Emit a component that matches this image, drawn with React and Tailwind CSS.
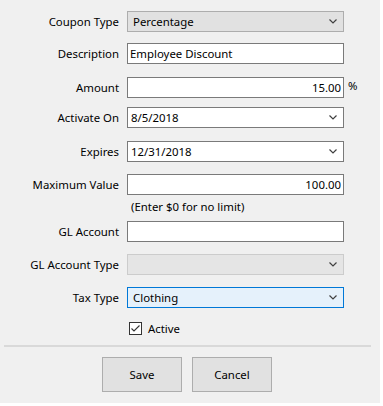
const Chevron = ({ color = "#404040" }) => (
  <svg width="8" height="5" viewBox="0 0 8 5" className="shrink-0">
    <path d="M0.5 0.5 L4 4 L7.5 0.5" fill="none" stroke={color} strokeWidth="1.2" />
  </svg>
);

const Row = ({ label, mt, children, extra }) => (
  <div className={`flex items-center h-[21px] ${mt}`}>
    <div className="w-[120px] pr-px text-right whitespace-nowrap">{label}</div>
    <div className="ml-[7px] w-[217px] h-full">{children}</div>
    {extra}
  </div>
);

const Select = ({ value, variant = "white" }) => {
  const styles = {
    gray: "bg-[#e1e1e1] border-[#adadad]",
    white: "bg-white border-[#7a7a7a]",
    disabled: "bg-[#e5e5e5] border-[#cccccc]",
    focus: "bg-[#e5f1fb] border-[#0078d7]",
  };
  return (
    <div className={`flex items-center justify-between h-full border ${styles[variant]} ${variant === "white" ? "pl-[3px]" : "pl-[5px]"} pr-[6px]`}>
      <span>{value}</span>
      <Chevron />
    </div>
  );
};

const Input = ({ value = "", right }) => (
  <div className={`flex items-center h-full bg-white border border-[#7a7a7a] px-[2px] ${right ? "justify-end" : ""}`}>
    <span>{value}</span>
  </div>
);

const App = () => {
  return (
    <div className="min-h-screen bg-white">
      <div
        className="w-[380px] h-[403px] bg-[#f0f0f0] text-[11.4px] text-black flex flex-col"
        style={{ fontFamily: '"Noto Sans", "Segoe UI", sans-serif' }}
      >
        <Row label="Coupon Type" mt="mt-[11px]">
          <Select value="Percentage" variant="gray" />
        </Row>
        <Row label="Description" mt="mt-[11px]">
          <Input value="Employee Discount" />
        </Row>
        <Row label="Amount" mt="mt-[13px]" extra={<span className="ml-[4px] -mt-[3px]">%</span>}>
          <Input value="15.00" right />
        </Row>
        <Row label="Activate On" mt="mt-[9px]">
          <Select value="8/5/2018" />
        </Row>
        <Row label="Expires" mt="mt-[13px]">
          <Select value="12/31/2018" />
        </Row>
        <Row label="Maximum Value" mt="mt-[12px]">
          <Input value="100.00" right />
        </Row>
        <div className="ml-[131px] mt-[3px] h-[17px] leading-[17px]">(Enter $0 for no limit)</div>
        <Row label="GL Account" mt="mt-[6px]">
          <Input />
        </Row>
        <Row label="GL Account Type" mt="mt-[12px]">
          <Select value="" variant="disabled" />
        </Row>
        <Row label="Tax Type" mt="mt-[12px]">
          <Select value="Clothing" variant="focus" />
        </Row>
        <div className="flex items-center ml-[129px] mt-[13px] h-[15px]">
          <div className="w-[13px] h-[13px] border border-[#333333] bg-white flex items-center justify-center">
            <svg width="11" height="11" viewBox="0 0 11 11">
              <path d="M1.5 5.5 L4 8 L9.5 2.5" fill="none" stroke="#333333" strokeWidth="1.1" />
            </svg>
          </div>
          <span className="ml-[6px]">Active</span>
        </div>
        <div className="mx-[4px] w-[367px] h-[2px] bg-[#d9d9d9] mt-[9px]" />
        <div className="flex ml-[102px] mt-[10px] gap-[10px]">
          <button className="w-[80px] h-[35px] bg-[#e1e1e1] border border-[#adadad]">Save</button>
          <button className="w-[80px] h-[35px] bg-[#e1e1e1] border border-[#adadad]">Cancel</button>
        </div>
      </div>
    </div>
  );
};

export default App;
